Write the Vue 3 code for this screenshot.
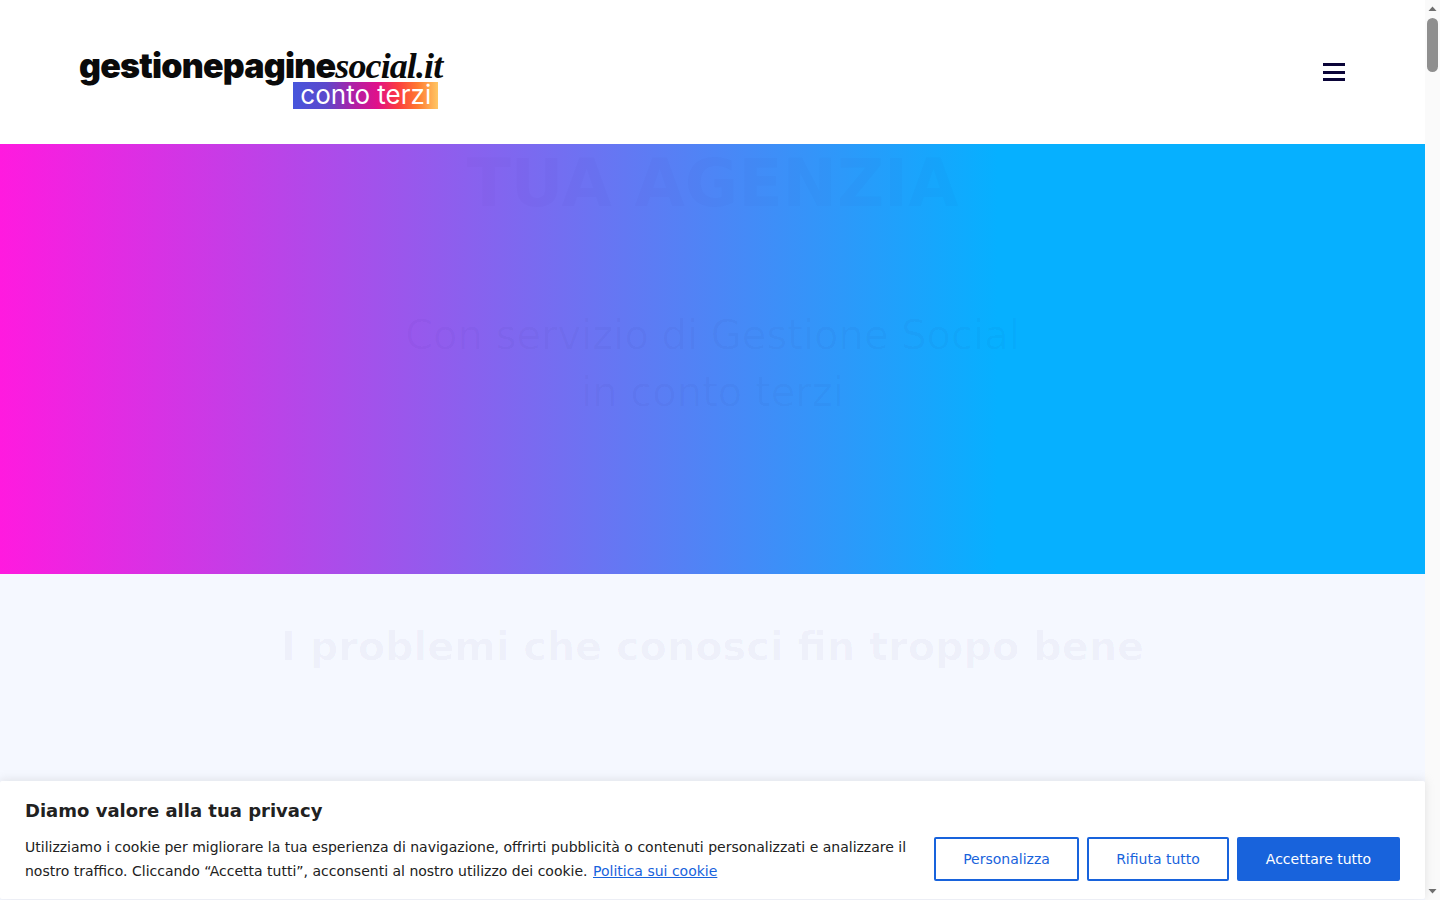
<template>
  <div class="screen">
    <div class="page">
      <header class="topbar">
        <div class="logo">
          <div class="logo-name">gestionepagine<em>social.it</em></div>
          <div class="logo-badge">conto terzi</div>
        </div>
        <button class="burger" aria-label="Menu">
          <span></span>
          <span></span>
          <span></span>
        </button>
      </header>

      <section class="hero">
        <h1>TUA AGENZIA</h1>
        <p>Con servizio di Gestione Social<br>in conto terzi</p>
      </section>

      <section class="problems">
        <h2>I problemi che conosci fin troppo bene</h2>
      </section>

      <div class="cookie">
        <p class="cookie-title">Diamo valore alla tua privacy</p>
        <div class="cookie-row">
          <p class="cookie-text">
            Utilizziamo i cookie per migliorare la tua esperienza di navigazione, offrirti pubblicità o contenuti personalizzati e analizzare il nostro traffico. Cliccando “Accetta tutti”, acconsenti al nostro utilizzo dei cookie.
            <a href="#">Politica sui cookie</a>
          </p>
          <div class="cookie-btns">
            <button class="btn w145">Personalizza</button>
            <button class="btn w142">Rifiuta tutto</button>
            <button class="btn solid">Accettare tutto</button>
          </div>
        </div>
      </div>
    </div>

    <div class="scrollbar">
      <svg width="15" height="17" viewBox="0 0 15 17"><path d="M3.5 11 L7.5 6.5 L11.5 11 Z" fill="#6e6e6e" /></svg>
      <div class="track"><div class="thumb"></div></div>
      <svg width="15" height="17" viewBox="0 0 15 17"><path d="M3.5 6 L7.5 10.5 L11.5 6 Z" fill="#6e6e6e" /></svg>
    </div>
  </div>
</template>

<script setup>
</script>

<style>
html, body {
  overflow: hidden;
}
</style>

<style scoped>
.screen {
  display: flex;
  height: 900px;
  overflow: hidden;
  font-family: "DejaVu Sans", sans-serif;
}

.page {
  position: relative;
  flex: 1;
  min-width: 0;
  display: flex;
  flex-direction: column;
}

.topbar {
  height: 144px;
  flex-shrink: 0;
  background: #fff;
  display: flex;
  justify-content: space-between;
  align-items: center;
  padding: 0 80px;
}

.logo {
  display: flex;
  flex-direction: column;
  align-items: flex-end;
  margin-top: 15px;
  margin-left: -1px;
}

.logo-name {
  font-family: Inter, sans-serif;
  font-weight: 900;
  font-size: 34px;
  line-height: 32px;
  letter-spacing: -0.8px;
  color: #0a0a0a;
  white-space: nowrap;
}

.logo-name em {
  font-family: "Liberation Serif", serif;
  font-weight: 700;
  font-size: 36px;
  letter-spacing: -0.9px;
}

.logo-badge {
  width: 145px;
  height: 27px;
  margin-right: 4px;
  background: linear-gradient(90deg, #4756dc 0%, #5c48cc 23%, #b01fa5 42%, #e0108a 58%, #fb3a40 72%, #ff7a30 86%, #ffc765 100%);
  color: #fff;
  font-family: Inter, sans-serif;
  font-size: 26px;
  line-height: 26px;
  text-align: center;
  white-space: nowrap;
}

.burger {
  width: 22px;
  height: 18px;
  padding: 0;
  border: none;
  background: none;
  display: flex;
  flex-direction: column;
  justify-content: space-between;
}

.burger span {
  display: block;
  height: 3px;
  background: #0a0438;
}

.hero {
  height: 430px;
  flex-shrink: 0;
  background: linear-gradient(90deg, #ff1adf 0%, #06b0ff 70%);
  text-align: center;
}

.hero h1 {
  margin: 0;
  font-size: 65px;
  line-height: 80px;
  font-weight: 700;
  color: rgba(30, 20, 110, 0.02);
}

.hero p {
  margin: 0;
  padding-top: 83px;
  font-size: 40px;
  line-height: 57px;
  color: rgba(30, 20, 110, 0.03);
}

.problems {
  flex: 1;
  background: #f5f8ff;
  text-align: center;
}

.problems h2 {
  margin: 0;
  padding-top: 46px;
  font-size: 39.8px;
  line-height: 52px;
  font-weight: 700;
  color: rgba(30, 20, 110, 0.03);
}

.cookie {
  position: absolute;
  left: 0;
  right: 0;
  bottom: 1px;
  height: 118px;
  box-sizing: border-box;
  padding: 19px 25px 0 25px;
  background: #fff;
  border-radius: 2px;
  box-shadow: 0 -1px 10px rgba(172, 171, 171, 0.3);
  color: #212121;
}

.cookie-title {
  margin: 0;
  font-size: 18px;
  line-height: 22px;
  font-weight: 700;
}

.cookie-row {
  display: flex;
  justify-content: space-between;
  align-items: center;
  margin-top: 13px;
}

.cookie-text {
  width: 890px;
  margin: 0;
  font-size: 14px;
  line-height: 24px;
}

.cookie-text a {
  margin-left: 1px;
  color: #1863dc;
}

.cookie-btns {
  display: flex;
  gap: 8px;
}

.btn {
  height: 44px;
  box-sizing: border-box;
  border: 2px solid #1863dc;
  border-radius: 2px;
  background: #fff;
  color: #1863dc;
  font-family: "DejaVu Sans", sans-serif;
  font-size: 14px;
  padding: 0;
}

.w145 {
  width: 145px;
}

.w142 {
  width: 142px;
}

.solid {
  width: 163px;
  background: #1863dc;
  color: #fff;
}

.scrollbar {
  width: 15px;
  flex-shrink: 0;
  background: #fafafa;
  display: flex;
  flex-direction: column;
}

.track {
  flex: 1;
  padding: 1px 2px;
}

.thumb {
  height: 54px;
  border-radius: 6px;
  background: #8f8f8f;
}
</style>
